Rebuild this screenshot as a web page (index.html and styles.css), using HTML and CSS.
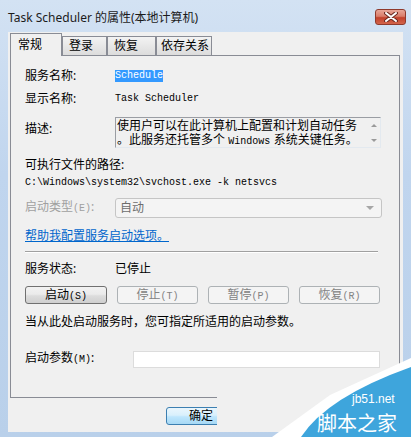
FILE: index.html
```html
<!DOCTYPE html>
<html lang="zh-CN">

<head>
    <meta charset="UTF-8">
    <meta name="viewport" content="width=device-width, initial-scale=1.0">
    <title>Task Scheduler 的属性</title>
    <link rel="stylesheet" href="styles.css">
</head>

<body>
    <div class="window">
        <div class="titlebar">
            <span class="title">Task Scheduler 的属性(本地计算机)</span>
            <div class="close-btn">
                <svg width="14" height="10" viewBox="0 0 14 10">
                    <path d="M2 1 L12 9 M12 1 L2 9" stroke="#6b2a20" stroke-width="4" stroke-linecap="round" />
                    <path d="M2 1 L12 9 M12 1 L2 9" stroke="#ffffff" stroke-width="2" stroke-linecap="round" />
                </svg>
            </div>
        </div>

        <div class="client">
            <div class="tabs">
                <div class="tab active">常规</div>
                <div class="tab tab-login">登录</div>
                <div class="tab tab-recover">恢复</div>
                <div class="tab tab-deps">依存关系</div>
            </div>

            <div class="panel">
                <div class="row row-name">
                    <span class="label">服务名称:</span>
                    <span class="mono selected">Schedule</span>
                </div>
                <div class="row row-display">
                    <span class="label">显示名称:</span>
                    <span class="mono">Task Scheduler</span>
                </div>
                <div class="row row-desc">
                    <span class="label label-desc">描述:</span>
                    <div class="textbox">
                        <div class="textbox-text">
                            <div>使用户可以在此计算机上配置和计划自动任务</div>
                            <div>。此服务还托管多个 <span class="mono">Windows</span> 系统关键任务。</div>
                        </div>
                        <div class="scrollbar">
                            <span class="arrow-up"></span>
                            <span class="arrow-down"></span>
                        </div>
                    </div>
                </div>
                <div class="row row-path-label">
                    <span>可执行文件的路径:</span>
                </div>
                <div class="row row-path">
                    <span class="mono">C:\Windows\system32\svchost.exe -k netsvcs</span>
                </div>
                <div class="row row-startup">
                    <span class="label disabled">启动类型<span class="mono">(E)</span>:</span>
                    <div class="select">
                        <span>自动</span>
                        <span class="select-arrow"></span>
                    </div>
                </div>
                <div class="row row-link">
                    <a class="help-link" href="#">帮助我配置服务启动选项。</a>
                </div>
                <div class="separator"></div>
                <div class="row row-status">
                    <span class="label">服务状态:</span>
                    <span>已停止</span>
                </div>
                <div class="row row-buttons">
                    <button class="btn">启动<span class="mono">(S)</span></button>
                    <button class="btn" disabled>停止<span class="mono">(T)</span></button>
                    <button class="btn" disabled>暂停<span class="mono">(P)</span></button>
                    <button class="btn" disabled>恢复<span class="mono">(R)</span></button>
                </div>
                <div class="row row-hint">
                    <span>当从此处启动服务时，您可指定所适用的启动参数。</span>
                </div>
                <div class="row row-params">
                    <span class="label label-params">启动参数<span class="mono">(M)</span>:</span>
                    <div class="input"></div>
                </div>
            </div>

            <div class="dialog-buttons">
                <button class="btn-default">确定</button>
            </div>
        </div>

        <svg class="watermark" width="194" height="82" viewBox="0 0 194 82">
            <rect x="0" y="39" width="186" height="38" fill="#f0f0f0" />
            <polygon points="55,82 113,40 194,3 194,82" fill="#ffffff" />
            <path d="M84 82 Q110 42 194 12 L194 82 Z" fill="#3ea5dc" />
            <text x="135" y="48" class="wm-small">jb51.net</text>
            <text x="100" y="76" class="wm-big">脚本之家</text>
        </svg>
    </div>
</body>

</html>
```

FILE: styles.css
```css
body {
    margin: 0;
    font-family: "Noto Sans", "Noto Sans CJK SC", sans-serif;
    font-size: 12px;
    color: #000;
}

.window {
    position: relative;
    width: 411px;
    height: 437px;
    overflow: hidden;
    background: linear-gradient(to bottom, #d3e2f3 0%, #c0d5ee 40%, #b9d0ea 100%);
}

.titlebar {
    height: 32px;
    display: flex;
    align-items: flex-start;
    justify-content: space-between;
    padding: 0 5px 0 8px;
    box-sizing: border-box;
}

.title {
    margin-top: 9px;
    font-size: 12px;
    line-height: 18px;
    color: #1b1b1b;
}

.close-btn {
    margin-top: 9px;
    width: 31px;
    height: 16px;
    box-sizing: border-box;
    border: 1px solid #8f3a2c;
    border-radius: 3px;
    background: linear-gradient(to bottom, #e8a697 0%, #d97d6a 45%, #c2412b 55%, #d2654b 100%);
    display: flex;
    align-items: center;
    justify-content: center;
}

.client {
    margin: 0 8px;
    height: 400px;
    background: #f0f0f0;
    padding: 1px 0 0 2px;
    box-sizing: border-box;
}

/* tabs */
.tabs {
    display: flex;
    align-items: flex-end;
    height: 22px;
}

.tab {
    height: 19px;
    box-sizing: border-box;
    border: 1px solid #898c95;
    border-bottom: none;
    background: linear-gradient(to bottom, #f3f3f3, #dcdcdc);
    line-height: 18px;
    padding-left: 6px;
    white-space: nowrap;
}

.tab.active {
    width: 52px;
    height: 23px;
    margin-bottom: -1px;
    position: relative;
    z-index: 1;
    background: #f0f0f0;
    padding-left: 7px;
    line-height: 22px;
}

.tab-login {
    width: 45px;
}

.tab-recover {
    width: 49px;
}

.tab-deps {
    width: 56px;
    padding-left: 4px;
}

.panel {
    width: 390px;
    height: 343px;
    box-sizing: border-box;
    border: 1px solid #898c95;
    background: #f0f0f0;
    padding: 12px 0 0 14px;
}

.row {
    display: flex;
    align-items: center;
    line-height: 16px;
}

.label {
    width: 90px;
    flex-shrink: 0;
}

.mono {
    font-family: "Liberation Mono", monospace;
    font-size: 10px;
}

.selected {
    background: #3399ff;
    color: #fff;
    line-height: 12px;
}

.disabled {
    color: #a0a0a0;
}

.row-display {
    margin-top: 7px;
}

.row-desc {
    margin-top: 10px;
    align-items: flex-start;
}

.label-desc {
    margin-top: 4px;
}

.textbox {
    width: 266px;
    height: 31px;
    box-sizing: border-box;
    border: 1px solid;
    border-color: #9a9da3 #e3e9ef #e3e9ef #9a9da3;
    display: flex;
}

.textbox-text {
    flex: 1;
    padding: 1px 0 0 1px;
    font-family: "Liberation Sans", "Noto Sans CJK SC", sans-serif;
    line-height: 14px;
    white-space: nowrap;
    overflow: hidden;
}

.scrollbar {
    width: 13px;
    display: flex;
    flex-direction: column;
    justify-content: space-between;
    align-items: center;
    padding: 6px 0 5px;
    box-sizing: border-box;
}

.arrow-up,
.arrow-down {
    width: 0;
    height: 0;
    border-left: 3px solid transparent;
    border-right: 3px solid transparent;
}

.arrow-up {
    border-bottom: 3px solid #9a9a9a;
}

.arrow-down {
    border-top: 3px solid #9a9a9a;
}

.row-path-label {
    margin-top: 9px;
}

.row-path {
    margin-top: 2px;
}

.row-startup {
    margin-top: 7px;
}

.select {
    width: 267px;
    height: 20px;
    box-sizing: border-box;
    border: 1px solid #c5c5c5;
    border-radius: 3px;
    background: #f4f4f4;
    color: #6d6d6d;
    display: flex;
    align-items: center;
    justify-content: space-between;
    padding: 0 7px 0 4px;
}

.select-arrow {
    width: 0;
    height: 0;
    border-left: 4px solid transparent;
    border-right: 4px solid transparent;
    border-top: 4px solid #a6a6a6;
}

.row-link {
    margin-top: 10px;
}

.help-link {
    color: #0066cc;
    text-decoration: underline;
}

.separator {
    margin-top: 7px;
    width: 353px;
    border-top: 1px solid #a0a0a0;
    border-bottom: 1px solid #ffffff;
}

.row-status {
    margin-top: 8px;
}

.row-buttons {
    margin-top: 9px;
    gap: 10px;
}

.btn {
    width: 82px;
    height: 18px;
    padding: 0;
    box-sizing: border-box;
    border: 1px solid #707070;
    border-radius: 3px;
    background: linear-gradient(to bottom, #f2f2f2 0%, #ebebeb 45%, #dddddd 55%, #cfcfcf 100%);
    font-family: "Noto Sans", "Noto Sans CJK SC", sans-serif;
    font-size: 12px;
    line-height: 16px;
    color: #000;
}

.btn:disabled {
    width: 81px;
    border-color: #adb2b5;
    background: #f4f4f4;
    color: #838383;
}

.row-hint {
    margin-top: 10px;
}

.row-params {
    margin-top: 20px;
}

.label-params {
    width: 108px;
}

.input {
    width: 247px;
    height: 17px;
    box-sizing: border-box;
    border: 1px solid #dcdcdc;
    background: #ffffff;
}

.dialog-buttons {
    padding: 9px 0 0 156px;
}

.btn-default {
    width: 64px;
    height: 18px;
    padding: 0 0 0 22px;
    box-sizing: border-box;
    border: 1px solid #3c7fb1;
    border-radius: 3px;
    background: linear-gradient(to bottom, #eaf6fd 0%, #d9f0fc 45%, #bee6fd 55%, #a7d9f5 100%);
    font-family: "Noto Sans", "Noto Sans CJK SC", sans-serif;
    font-size: 12px;
    line-height: 16px;
    text-align: left;
    color: #000;
}

/* site watermark over the bottom-right corner */
.watermark {
    position: absolute;
    right: 0;
    bottom: 0;
}

.wm-small {
    font-family: "Liberation Sans", sans-serif;
    font-size: 12px;
    fill: #ffffff;
}

.wm-big {
    font-family: "Noto Sans CJK SC", sans-serif;
    font-size: 20px;
    fill: #ffffff;
}
```
